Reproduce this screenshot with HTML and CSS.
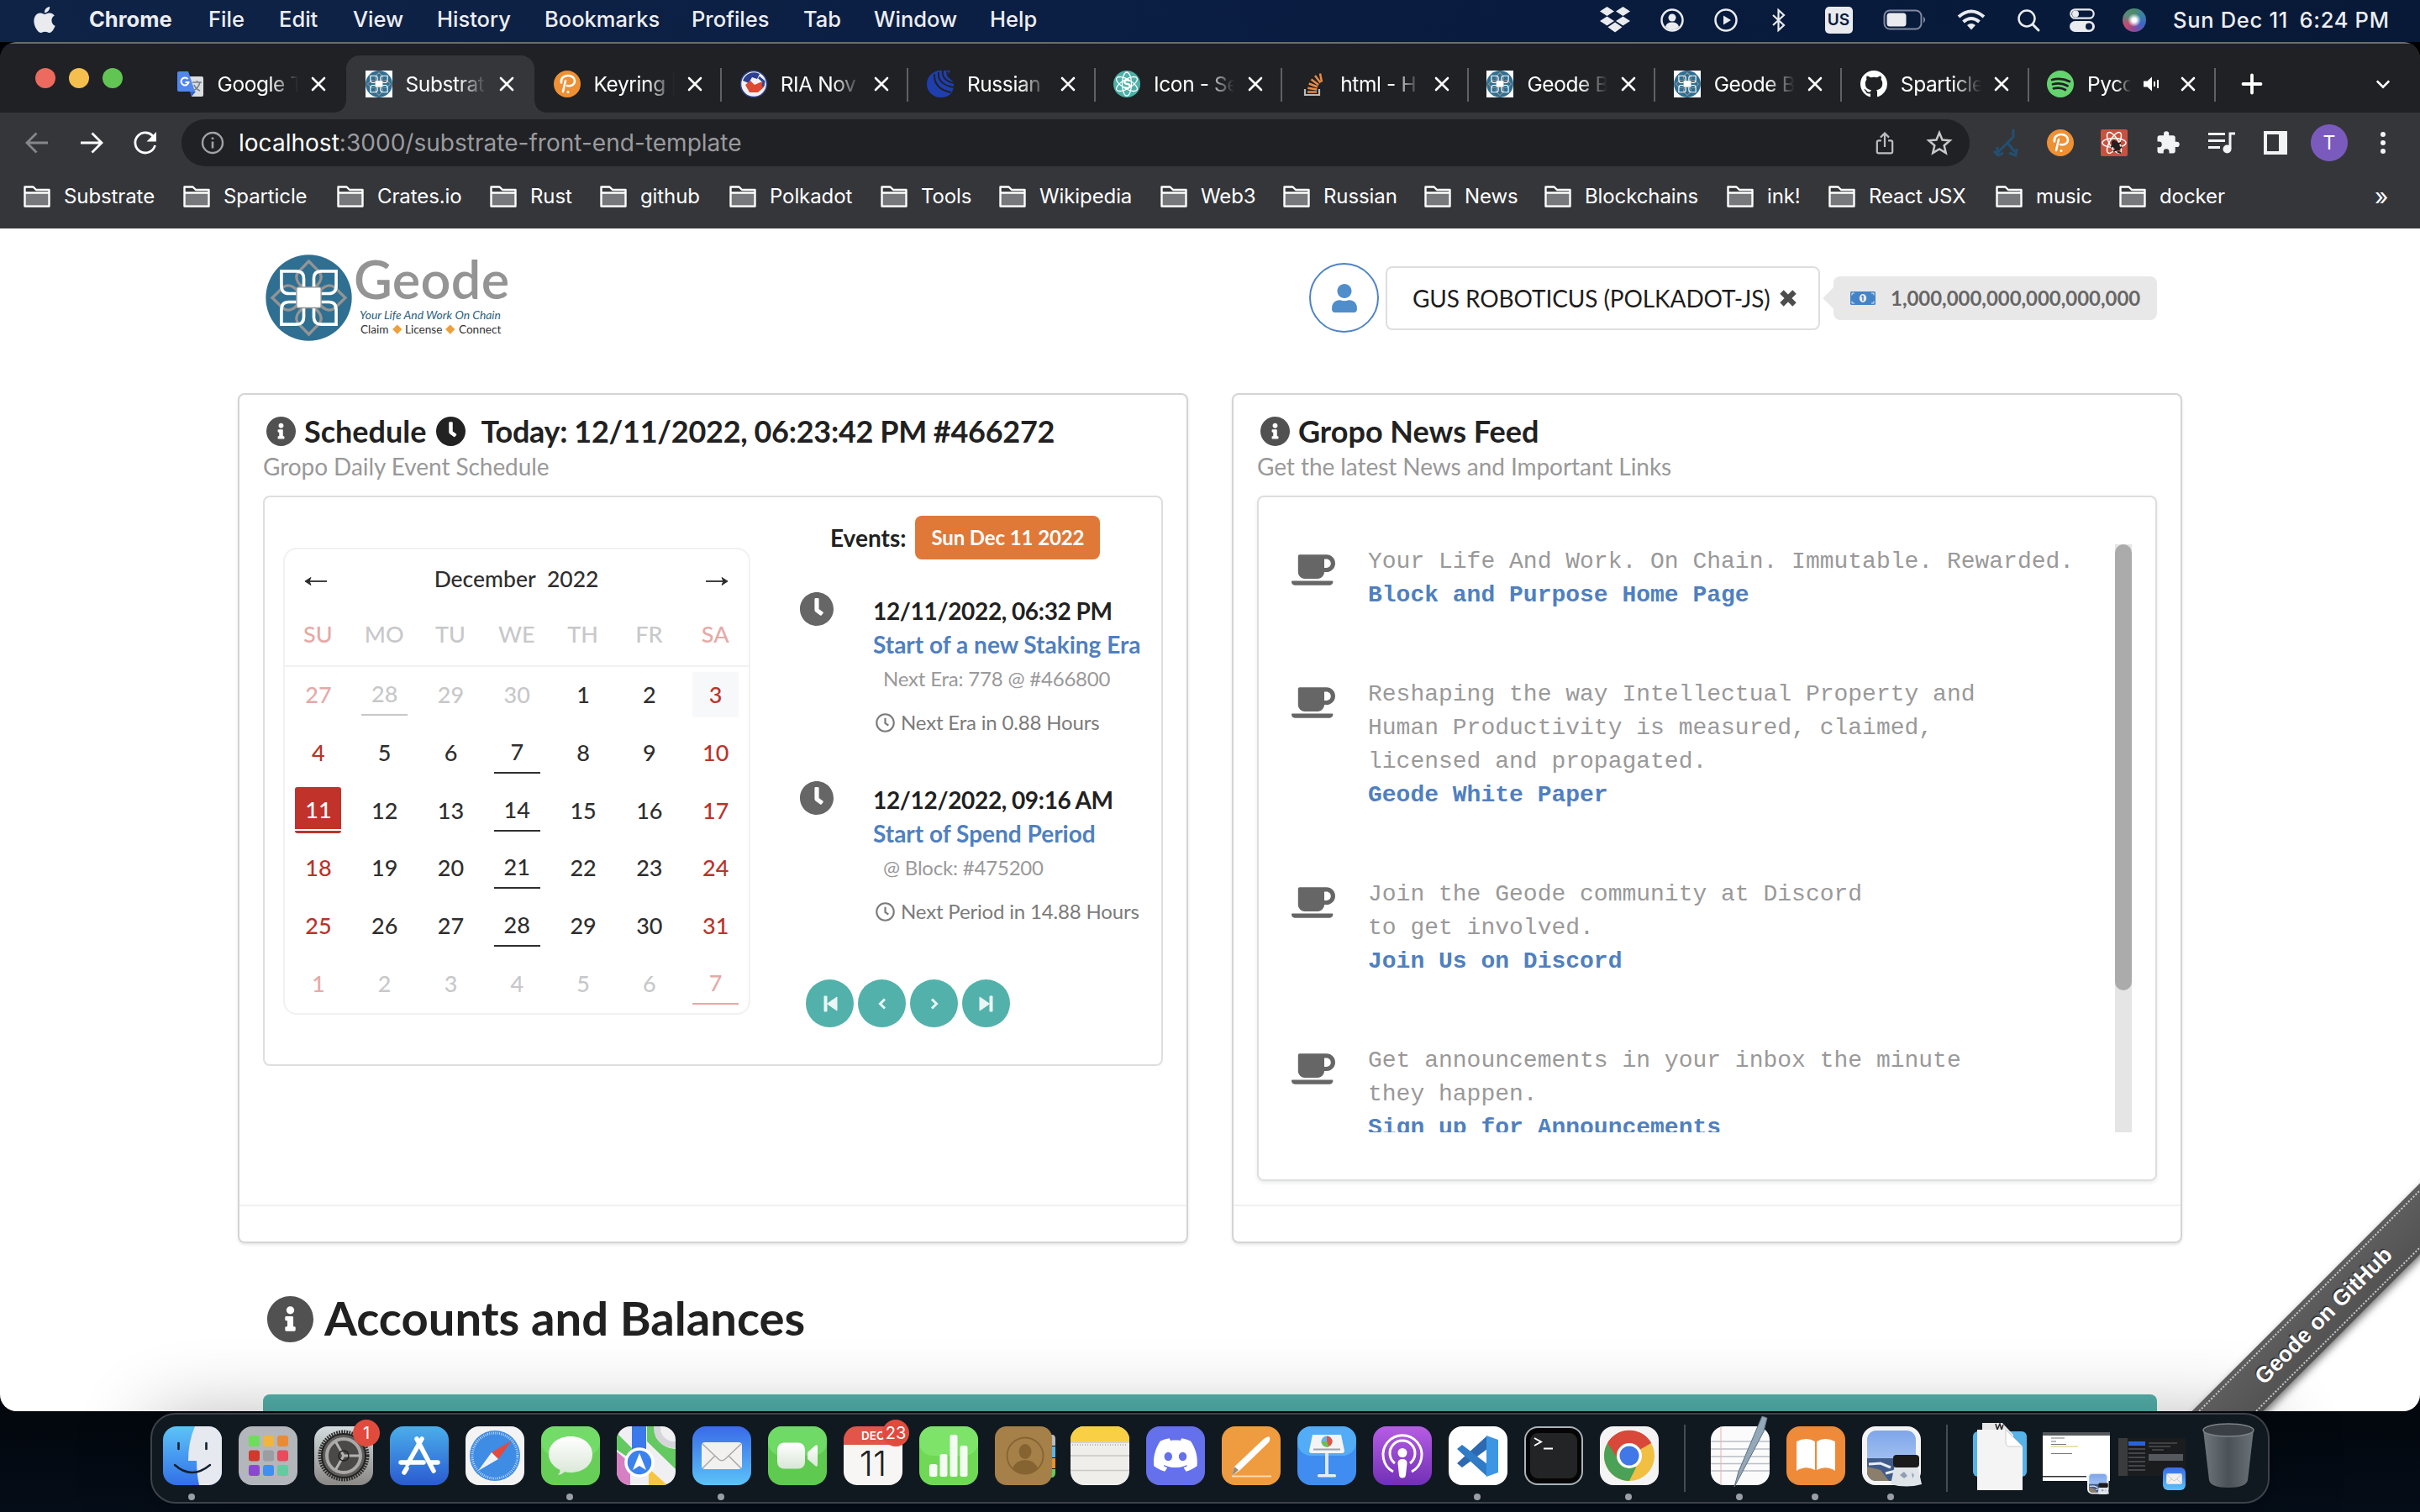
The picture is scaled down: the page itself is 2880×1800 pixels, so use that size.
FILE: index.html
```html
<!DOCTYPE html>
<html lang="en">
<head>
<meta charset="utf-8">
<title>Substrate Front End Template</title>
<link rel="stylesheet" href="styles.css">
</head>
<body>
<svg class="defs" aria-hidden="true">
  <symbol id="geode" viewBox="48 38 310 310">
    <circle cx="203" cy="193" r="154" fill="#2f6f91"/>
    <g fill="none" stroke="#949494" stroke-width="10">
      <path id="gp" d="M216 158C238 150 258 122 240 100L203 62 166 100C148 122 168 150 190 158"/>
      <use href="#gp" transform="rotate(90 203 193)"/><use href="#gp" transform="rotate(180 203 193)"/><use href="#gp" transform="rotate(270 203 193)"/>
    </g>
    <g fill="none" stroke="#fff" stroke-width="11">
      <path id="wp" d="M185 160V124Q185 98 159 98H105V150Q105 178 132 178H165"/>
      <use href="#wp" transform="matrix(-1 0 0 1 406 0)"/><use href="#wp" transform="matrix(1 0 0 -1 0 386)"/><use href="#wp" transform="matrix(-1 0 0 -1 406 386)"/>
    </g>
    <rect x="159" y="155" width="88" height="74" rx="6" fill="#fff" stroke="#949494" stroke-width="4"/>
  </symbol>
  <symbol id="close" viewBox="0 0 18 18"><path d="M2 2l14 14M16 2L2 16" fill="none" stroke="#fff" stroke-width="2.6" stroke-linecap="round"/></symbol>
  <symbol id="folder" viewBox="0 0 32 26"><path d="M2 8h28v15H2z" fill="#77787b"/><path d="M1.5 24.5v-23h10l3.5 3.500h15.500v19.500zM1.500 8.500h29" fill="none" stroke="#fff" stroke-width="2.400" stroke-linejoin="round"/></symbol>
  <symbol id="info" viewBox="8 8 496 496"><path d="M256 8C119.043 8 8 119.083 8 256c0 136.997 111.043 248 248 248s248-111.003 248-248C504 119.083 392.957 8 256 8zm0 110c23.196 0 42 18.804 42 42s-18.804 42-42 42-42-18.804-42-42 18.804-42 42-42zm56 254c0 6.627-5.373 12-12 12h-88c-6.627 0-12-5.373-12-12v-24c0-6.627 5.373-12 12-12h12v-64h-12c-6.627 0-12-5.373-12-12v-24c0-6.627 5.373-12 12-12h64c6.627 0 12 5.373 12 12v100h12c6.627 0 12 5.373 12 12v24z"/></symbol>
  <symbol id="clock" viewBox="8 8 496 496"><path d="M256,8C119,8,8,119,8,256S119,504,256,504,504,393,504,256,393,8,256,8Zm92.49,313h0l-20,25a16,16,0,0,1-22.49,2.5h0l-67-49.72a40,40,0,0,1-15-31.23V112a16,16,0,0,1,16-16h32a16,16,0,0,1,16,16V256l58,42.5A16,16,0,0,1,348.490,321Z"/></symbol>
  <symbol id="clock-o" viewBox="0 0 24 24"><circle cx="12" cy="12" r="10.700" fill="none" stroke="currentColor" stroke-width="2.200"/><path d="M12 6v6.400l4 2.900" fill="none" stroke="currentColor" stroke-width="2.300"/></symbol>
  <symbol id="cup" viewBox="0 32 640 448"><path d="M192 384h192c53 0 96-43 96-96h32c70.600 0 128-57.400 128-128S582.600 32 512 32H120c-13.300 0-24 10.700-24 24v232c0 53 43 96 96 96zM512 96c35.300 0 64 28.700 64 64s-28.700 64-64 64h-32V96h32zm47.700 384H48.300c-47.600 0-61-64-36-64h583.300c25 0 11.800 64-35.900 64z"/></symbol>
  <symbol id="pdot" viewBox="0 0 32 32"><circle cx="16" cy="16" r="16" fill="#ee9034"/><path d="M11 25l3-13M9 14.500C8 9 12 6 17 6c5 0 8 3 8 6.500 0 4-4 6.500-9 5.500" fill="none" stroke="#fff" stroke-width="2.600" stroke-linecap="round"/><circle cx="17" cy="25.500" r="1.500" fill="#fff"/></symbol>
  <symbol id="mail" viewBox="0 0 70 70"><rect width="70" height="70" rx="16" fill="url(#mailg)"/><rect x="11" y="19" width="48" height="32" rx="4" fill="#f2f1f0"/><path d="M12 21l19 18q4 3.500 8 0l19-18M12 50l15-15M58 50L43 35" fill="none" stroke="#a9a9a9" stroke-width="1.500"/></symbol>
  <linearGradient id="mailg" x1="0" y1="0" x2="0" y2="1"><stop offset="0" stop-color="#3a6be8"/><stop offset="1" stop-color="#5bc3f8"/></linearGradient>
  <linearGradient id="skyg" x1="0" y1="0" x2="0" y2="1"><stop offset="0" stop-color="#7fa6ea"/><stop offset="1" stop-color="#b8d2f4"/></linearGradient>
  <linearGradient id="whiteg" x1="0" y1="0" x2="0" y2="1"><stop offset="0" stop-color="#fff"/><stop offset="1" stop-color="#d9e6d6"/></linearGradient>
  <linearGradient id="trashg" x1="0" y1="0" x2="1" y2="0"><stop offset="0" stop-color="#70777c"/><stop offset=".5" stop-color="#4b5257"/><stop offset="1" stop-color="#6b7277"/></linearGradient>
  <linearGradient id="finderg" x1="0" y1="0" x2="0" y2="1"><stop offset="0" stop-color="#5cc4f7"/><stop offset="1" stop-color="#3270e8"/></linearGradient>
  <linearGradient id="gearg" x1="0" y1="0" x2="0" y2="1"><stop offset="0" stop-color="#d3dcde"/><stop offset="1" stop-color="#8a8885"/></linearGradient>
  <symbol id="preview" viewBox="0 0 74 74"><rect width="70" height="70" rx="16" fill="#f4f4f4"/><rect x="6" y="5" width="58" height="60" rx="11" fill="url(#skyg)"/><path d="M6 38h58v16a11 11 0 0 1-11 11H17A11 11 0 0 1 6 54z" fill="#3f5b8a"/><path d="M6 48l16 4 10 13H17A11 11 0 0 1 6 54z" fill="#8b7f6b"/><path d="M8 45l14-1 12 5M28 56l12-3" stroke="#e6edf4" stroke-width="3" fill="none"/><path d="M39 46h27l5 23q-18 5-37 0z" fill="#dfe4e8"/><rect x="37" y="34" width="31" height="15" rx="4" fill="#1b1b1b"/><path d="M45 58l5-4 4 5-4 3zM59 55l3 3-2 4" fill="#8fa0b0"/></symbol>
</svg>

<header class="menubar">
  <nav class="menus">
    <svg class="apple" viewBox="2 0 20 24"><path fill="#e9ebef" d="M12.152 6.896c-.948 0-2.415-1.078-3.960-1.040-2.040.027-3.910 1.183-4.961 3.014-2.117 3.675-.546 9.103 1.519 12.090 1.013 1.454 2.208 3.090 3.792 3.039 1.520-.065 2.090-.987 3.935-.987 1.831 0 2.350.987 3.960.948 1.637-.026 2.676-1.480 3.676-2.948 1.156-1.688 1.636-3.325 1.662-3.415-.039-.013-3.182-1.221-3.220-4.857-.026-3.040 2.480-4.494 2.597-4.559-1.429-2.090-3.623-2.324-4.390-2.376-2-.156-3.675 1.090-4.610 1.090zM15.530 3.830c.843-1.012 1.400-2.427 1.245-3.830-1.207.052-2.662.805-3.532 1.818-.780.896-1.454 2.338-1.273 3.714 1.338.104 2.715-.688 3.559-1.701"/></svg>
    <span class="app">Chrome</span><span>File</span><span>Edit</span><span>View</span><span>History</span><span>Bookmarks</span><span>Profiles</span><span>Tab</span><span>Window</span><span>Help</span>
  </nav>
  <div class="status">
    <svg width="38" height="34" viewBox="0 0 38 34" fill="#e9ebef"><path d="M9.500 1L18 6.500 9.500 12 1 6.500zM28.500 1L37 6.500 28.500 12 20 6.500zM9.500 12.500L18 18l-8.500 5.500L1 18zM28.500 12.500L37 18l-8.500 5.500L20 18zM19 19.500l8.500 5.700L19 31.500l-8.500-6.300z"/></svg>
    <svg width="28" height="28" viewBox="0 0 28 28"><circle cx="14" cy="14" r="12.500" fill="none" stroke="#e9ebef" stroke-width="2.500"/><circle cx="14" cy="11" r="4.500" fill="#e9ebef"/><path d="M6 22q1-5.500 8-5.500t8 5.500q-3.500 3.500-8 3.500T6 22z" fill="#e9ebef"/></svg>
    <svg width="28" height="28" viewBox="0 0 28 28"><circle cx="14" cy="14" r="12.500" fill="none" stroke="#e9ebef" stroke-width="2.500"/><path d="M11 8.500l9 5.500-9 5.500z" fill="#e9ebef"/></svg>
    <svg width="18" height="28" viewBox="0 0 18 28"><path d="M2 8l13 12-6.500 6V2L15 8 2 20" fill="none" stroke="#e9ebef" stroke-width="2.200"/></svg>
    <span class="us">US</span>
    <svg width="52" height="26" viewBox="0 0 52 26"><rect x="1.500" y="1.500" width="44" height="22" rx="6.500" fill="none" stroke="#8089a0" stroke-width="2"/><rect x="4.500" y="4.500" width="23" height="16" rx="3.500" fill="#e9ebef"/><path d="M48 8.500q4 4 0 8z" fill="#8089a0"/></svg>
    <svg width="34" height="26" viewBox="0 0 34 26"><path d="M2 9q15-13 30 0M7.500 15q9.500-8 19 0" fill="none" stroke="#e9ebef" stroke-width="4"/><path d="M12 19q5-4 10 0l-5 5.500z" fill="#e9ebef"/></svg>
    <svg width="28" height="28" viewBox="0 0 28 28"><circle cx="12" cy="12" r="9.500" fill="none" stroke="#e9ebef" stroke-width="2.500"/><path d="M19 19l7 7" stroke="#e9ebef" stroke-width="3" stroke-linecap="round"/></svg>
    <svg width="30" height="28" viewBox="0 0 30 28"><rect x="1.300" y="1.300" width="27.400" height="10.400" rx="5.200" fill="none" stroke="#e9ebef" stroke-width="2.200"/><circle cx="7" cy="6.500" r="4" fill="#e9ebef"/><rect x="0" y="15" width="30" height="13" rx="6.500" fill="#e9ebef"/><circle cx="23" cy="21.500" r="4" fill="#0b1d42"/></svg>
    <span class="siri"></span>
    <time>Sun Dec 11&ensp;6:24 PM</time>
  </div>
</header>

<section class="window">
  <div class="tabstrip">
    <div class="lights"><i></i><i></i><i></i></div>
    <div class="tab wide">
      <svg class="fav" viewBox="0 0 32 32"><path d="M13 7h16a2 2 0 0 1 2 2v20a2 2 0 0 1-2 2H17z" fill="#dcdee0"/><path d="M18 14h11M23.500 12v2M27 14q-2 7-8 10M20 17q2 5 7 7" stroke="#76808c" stroke-width="1.600" fill="none"/><path d="M17 31l5-6h-7z" fill="#3663c8"/><path d="M2 1h11l8 24H2a2 2 0 0 1-2-2V3a2 2 0 0 1 2-2z" fill="#5287ec"/><path d="M12.500 10a4.500 4.500 0 1 0 1 4h-4" fill="none" stroke="#fff" stroke-width="2"/></svg>
      <span class="title">Google T</span><svg class="x"><use href="#close"/></svg></div>
    <div class="tab wide active"><span class="fav white"><svg viewBox="0 0 32 32"><use href="#geode" width="32" height="32"/></svg></span><span class="title">Substrat</span><svg class="x"><use href="#close"/></svg></div>
    <div class="tab"><svg class="fav"><use href="#pdot"/></svg><span class="title">Keyring |</span><svg class="x"><use href="#close"/></svg></div>
    <div class="tab"><svg class="fav" viewBox="0 0 32 32"><circle cx="16" cy="16" r="15.500" fill="#f2f2f6" stroke="#31458f" stroke-width="1.500"/><path d="M3 12a14 14 0 0 1 20-8l-3 6-6-2-4 7z" fill="#2d3f92"/><path d="M6 17l6-5 5 5 9-4 2 7-7 6H11z" fill="#dd4a32"/><path d="M22 8l6 5-1 6" stroke="#31458f" stroke-width="3" fill="none"/></svg><span class="title">RIA Nov</span><svg class="x"><use href="#close"/></svg></div>
    <div class="tab"><svg class="fav" viewBox="0 0 32 32"><path d="M16 0h12q-6 6 4 14v4q-1 14-16 14A16 16 0 0 1 16 0z" fill="#1f3fae"/><path d="M14 2q-2 14 18 18M19 0q-2 11 13 15M24 1q0 7 8 10M9 4q-1 18 20 22" stroke="#202124" stroke-width="2" fill="none"/></svg><span class="title">Russian</span><svg class="x"><use href="#close"/></svg></div>
    <div class="tab"><svg class="fav" viewBox="0 0 32 32"><circle cx="16" cy="16" r="16" fill="#4cb1a8"/><g fill="none" stroke="#fff" stroke-width="1.300"><ellipse cx="16" cy="16" rx="5.500" ry="14"/><ellipse cx="16" cy="16" rx="5.500" ry="14" transform="rotate(60 16 16)"/><ellipse cx="16" cy="16" rx="5.500" ry="14" transform="rotate(120 16 16)"/><path d="M19.500 12.500q-3.500-2.500-6 0 -1 3 3 3.500t3 3.500q-3 3-7 0" stroke-width="2.400"/></g></svg><span class="title">Icon - Se</span><svg class="x"><use href="#close"/></svg></div>
    <div class="tab"><svg class="fav" viewBox="0 0 32 32"><path d="M6 22v7h17v-7" fill="none" stroke="#b9bbbd" stroke-width="2.200"/><path d="M9 25.500h11M9.300 20.700l11 1.700M10.700 15.500l10.300 4M13.500 10.500l8.700 6.500M18 6l6.500 8.500M24 3.500l2 10" stroke="#e58b4a" stroke-width="2.500"/></svg><span class="title">html - H</span><svg class="x"><use href="#close"/></svg></div>
    <div class="tab"><span class="fav white"><svg viewBox="0 0 32 32"><use href="#geode" width="32" height="32"/></svg></span><span class="title">Geode B</span><svg class="x"><use href="#close"/></svg></div>
    <div class="tab"><span class="fav white"><svg viewBox="0 0 32 32"><use href="#geode" width="32" height="32"/></svg></span><span class="title">Geode B</span><svg class="x"><use href="#close"/></svg></div>
    <div class="tab"><svg class="fav" viewBox="0 0 16 16"><path fill="#fff" d="M8 0C3.580 0 0 3.580 0 8c0 3.540 2.290 6.530 5.470 7.590.4.070.550-.170.550-.380 0-.190-.010-.820-.010-1.490-2.010.370-2.530-.490-2.690-.940-.090-.230-.480-.940-.820-1.130-.280-.150-.680-.520-.010-.530.630-.010 1.080.580 1.230.820.720 1.210 1.870.870 2.330.660.070-.520.280-.870.510-1.070-1.780-.200-3.640-.890-3.640-3.950 0-.870.310-1.590.820-2.150-.080-.200-.360-1.020.080-2.120 0 0 .670-.210 2.200.820.640-.180 1.320-.270 2-.270s1.360.090 2 .270c1.530-1.040 2.200-.820 2.200-.820.440 1.100.160 1.920.080 2.120.510.560.820 1.270.820 2.150 0 3.070-1.870 3.750-3.650 3.950.290.250.540.730.540 1.480 0 1.070-.010 1.930-.010 2.200 0 .210.150.460.550.380A8.010 8.010 0 0 0 16 8c0-4.420-3.580-8-8-8z"/></svg><span class="title">Sparticle</span><svg class="x"><use href="#close"/></svg></div>
    <div class="tab"><svg class="fav" viewBox="0 0 32 32"><circle cx="16" cy="16" r="16" fill="#65d36e"/><path d="M6 11q11-3 21 2M7 16.300q9.500-2.500 17.500 2M8 21.300q8-2 14 1.700" fill="none" stroke="#202124" stroke-width="2.700" stroke-linecap="round"/></svg><span class="title short">Русс</span><svg class="sound" viewBox="0 0 18 18"><path d="M0 5.500h4.500L10 .5v17l-5.500-5H0z" fill="#fff"/><path d="M13 6v6M17 4v10" stroke="#fff" stroke-width="2"/></svg><svg class="x"><use href="#close"/></svg></div>
    <svg class="plus" viewBox="0 0 24 24"><path d="M12 1.500v21M1.500 12h21" stroke="#fff" stroke-width="3.800" stroke-linecap="round"/></svg>
    <svg class="chev" viewBox="0 0 20 12"><path d="M2 2l8 8 8-8" fill="none" stroke="#fff" stroke-width="3"/></svg>
  </div>

  <div class="toolbar">
    <svg class="nav" viewBox="0 0 28 28"><path d="M27 14H2M13.500 2.500L2 14l11.500 11.500" fill="none" stroke="#85878a" stroke-width="2.800"/></svg>
    <svg class="nav" viewBox="0 0 28 28"><path d="M1 14h25M14.500 2.500L26 14 14.500 25.500" fill="none" stroke="#fff" stroke-width="2.800"/></svg>
    <svg class="nav" viewBox="0 0 28 28"><path d="M24 7.500A12 12 0 1 0 25.500 17" fill="none" stroke="#fff" stroke-width="2.800"/><path d="M27 1v11.500H15.500z" fill="#fff"/></svg>
    <div class="omnibox">
      <svg class="i" viewBox="0 0 28 28"><circle cx="14" cy="14" r="12" fill="none" stroke="#a0a2a5" stroke-width="2.400"/><path d="M14 12.500v8M14 7.500v2.600" stroke="#a0a2a5" stroke-width="2.600"/></svg>
      <span class="url"><b>localhost</b>:3000/substrate-front-end-template</span>
      <svg class="share" viewBox="0 0 24 30"><path d="M7.500 11.500H4a2 2 0 0 0-2 2V26a2 2 0 0 0 2 2h16a2 2 0 0 0 2-2V13.500a2 2 0 0 0-2-2h-3.500M12 20V3M6.500 7.500L12 2l5.500 5.500" fill="none" stroke="#bdbec0" stroke-width="2.400"/></svg>
      <svg class="star" viewBox="0 0 28 28"><path d="M14 2.800l3.300 7.900 8.500.7-6.500 5.600 2 8.300L14 20.900l-7.300 4.400 2-8.300-6.500-5.600 8.500-.7z" fill="none" stroke="#c8c9ca" stroke-width="2.300"/></svg>
    </div>
    <div class="exts">
      <svg width="30" height="34" viewBox="0 0 30 34"><path d="M23 1v9L5 28M4 22v10M0 27l5 5 6-3M17 18l8 10M27 24l-1 8-8-3" fill="none" stroke="#234f72" stroke-width="3"/></svg>
      <svg width="32" height="32"><use href="#pdot"/></svg>
      <svg width="32" height="32" viewBox="0 0 32 32"><rect width="32" height="32" rx="2" fill="#c65240"/><g fill="none" stroke="#fff" stroke-width="1.500"><ellipse cx="16" cy="16" rx="14" ry="5.500"/><ellipse cx="16" cy="16" rx="14" ry="5.500" transform="rotate(60 16 16)"/><ellipse cx="16" cy="16" rx="14" ry="5.500" transform="rotate(120 16 16)"/></g><ellipse cx="18" cy="19" rx="4" ry="7" transform="rotate(-35 18 19)" fill="#241f20"/><path d="M12 21l12-5M15 26l10-5M20 27l4 1" stroke="#241f20" stroke-width="2"/></svg>
      <svg width="30" height="30" viewBox="0 0 24 24"><path fill="#f1f3f4" d="M20.500 11H19V7c0-1.100-.9-2-2-2h-4V3.500a2.500 2.500 0 0 0-5 0V5H4c-1.100 0-2 .9-2 2v3.800h1.500a2.700 2.700 0 0 1 0 5.400H2V20c0 1.100.9 2 2 2h3.800v-1.500a2.700 2.700 0 0 1 5.400 0V22H17c1.100 0 2-.9 2-2v-4h1.500a2.500 2.500 0 0 0 0-5z"/></svg>
      <svg width="32" height="26" viewBox="0 0 32 26"><path d="M0 2.500h20M0 10.500h20M0 18.500h14M26 20V2h6" fill="none" stroke="#f1f3f4" stroke-width="3"/><circle cx="22.500" cy="20.500" r="5" fill="#f1f3f4"/></svg>
      <svg width="28" height="28" viewBox="0 0 28 28"><path fill="#f1f3f4" fill-rule="evenodd" d="M0 0h28v28H0zM4 4v20h14V4z"/></svg>
      <span class="avatar">T</span>
      <svg width="8" height="26" viewBox="0 0 8 26" fill="#f1f3f4"><circle cx="4" cy="3" r="3"/><circle cx="4" cy="13" r="3"/><circle cx="4" cy="23" r="3"/></svg>
    </div>
  </div>

  <div class="bookmarks">
    <span><svg><use href="#folder"/></svg>Substrate</span><span><svg><use href="#folder"/></svg>Sparticle</span><span><svg><use href="#folder"/></svg>Crates.io</span><span><svg><use href="#folder"/></svg>Rust</span><span><svg><use href="#folder"/></svg>github</span><span><svg><use href="#folder"/></svg>Polkadot</span><span><svg><use href="#folder"/></svg>Tools</span><span><svg><use href="#folder"/></svg>Wikipedia</span><span><svg><use href="#folder"/></svg>Web3</span><span><svg><use href="#folder"/></svg>Russian</span><span><svg><use href="#folder"/></svg>News</span><span><svg><use href="#folder"/></svg>Blockchains</span><span><svg><use href="#folder"/></svg>ink!</span><span><svg><use href="#folder"/></svg>React JSX</span><span><svg><use href="#folder"/></svg>music</span><span><svg><use href="#folder"/></svg>docker</span><span class="more">»</span>
  </div>

  <main class="page">
    <div class="top">
      <div class="logo">
        <svg class="mark"><use href="#geode"/></svg>
        <div class="words">
          <div class="name">Geode</div>
          <div class="tagline">Your Life And Work On Chain</div>
          <div class="claims">Claim <i></i> License <i></i> Connect</div>
        </div>
      </div>
      <div class="account">
        <span class="user"><svg viewBox="0 0 448 512"><path fill="#4f8ecb" d="M224 256c70.700 0 128-57.300 128-128S294.700 0 224 0 96 57.300 96 128s57.300 128 128 128zm89.600 32h-16.700c-22.200 10.200-46.900 16-72.900 16s-50.600-5.800-72.900-16h-16.700C60.200 288 0 348.200 0 422.400V464c0 26.500 21.500 48 48 48h352c26.500 0 48-21.500 48-48v-41.600c0-74.200-60.200-134.400-134.400-134.400z"/></svg></span>
        <span class="select">GUS ROBOTICUS (POLKADOT-JS)<svg viewBox="2 2 16 16"><path d="M4 4l12 12M16 4L4 16" stroke="#4d4d4d" stroke-width="5"/></svg></span>
        <span class="balance"><svg viewBox="0 0 30 16"><rect width="30" height="16" rx="1.500" fill="#4384c8"/><ellipse cx="15" cy="8" rx="4.200" ry="5" fill="#e8e8e8"/><path d="M15 5v6M13.500 6.500L15 5" stroke="#4384c8" stroke-width="1.500"/><path d="M2 4.500V2h3M25 2h3v2.500M2 11.500V14h3M25 14h3v-2.500" stroke="#e8e8e8" fill="none"/></svg>1,000,000,000,000,000,000</span>
      </div>
    </div>

    <div class="cards">
      <article class="card">
        <div class="body">
          <h2><svg class="grey"><use href="#info"/></svg><span class="t1">Schedule</span><svg><use href="#clock"/></svg><span class="t2">Today: 12/11/2022, 06:23:42 PM #466272</span></h2>
          <p class="meta">Gropo Daily Event Schedule</p>
          <div class="segment schedule">
            <div class="calendar">
              <div class="cal-head"><svg viewBox="0 0 26 12"><path d="M26 6H3" stroke="#2c2c2c" stroke-width="1.800"/><path d="M0 6l7-4.500-2 4.500 2 4.500z" fill="#2c2c2c" stroke="#2c2c2c"/></svg><span>December&ensp;2022</span><svg viewBox="0 0 26 12"><path d="M0 6h23" stroke="#2c2c2c" stroke-width="1.800"/><path d="M26 6l-7-4.500 2 4.500-2 4.500z" fill="#2c2c2c" stroke="#2c2c2c"/></svg></div>
              <div class="cal-days"><span class="r l">SU</span><span>MO</span><span>TU</span><span>WE</span><span>TH</span><span>FR</span><span class="r l">SA</span></div>
              <div class="cal-grid">
                <b class="r l">27</b><b class="l u">28</b><b class="l">29</b><b class="l">30</b><b>1</b><b>2</b><b class="r h">3</b>
                <b class="r">4</b><b>5</b><b>6</b><b class="u">7</b><b>8</b><b>9</b><b class="r">10</b>
                <b class="today">11</b><b>12</b><b>13</b><b class="u">14</b><b>15</b><b>16</b><b class="r">17</b>
                <b class="r">18</b><b>19</b><b>20</b><b class="u">21</b><b>22</b><b>23</b><b class="r">24</b>
                <b class="r">25</b><b>26</b><b>27</b><b class="u">28</b><b>29</b><b>30</b><b class="r">31</b>
                <b class="r l">1</b><b class="l">2</b><b class="l">3</b><b class="l">4</b><b class="l">5</b><b class="l">6</b><b class="r l u">7</b>
              </div>
            </div>
            <div class="events">
              <div class="ev-head">Events: <span>Sun Dec 11 2022</span></div>
              <div class="event"><svg><use href="#clock"/></svg><div><strong>12/11/2022, 06:32 PM</strong><a>Start of a new Staking Era</a><p>Next Era: 778 @ #466800</p><small><svg><use href="#clock-o"/></svg>Next Era in 0.88 Hours</small></div></div>
              <div class="event"><svg><use href="#clock"/></svg><div><strong>12/12/2022, 09:16 AM</strong><a>Start of Spend Period</a><p>@ Block: #475200</p><small><svg><use href="#clock-o"/></svg>Next Period in 14.88 Hours</small></div></div>
              <div class="pager">
                <span><svg viewBox="0 0 20 20"><path d="M3 1h3v18H3zM18 2v16L6.500 10z" fill="#eaf6f5" stroke="#eaf6f5" stroke-linejoin="round"/></svg></span>
                <span><svg viewBox="0 0 20 20"><path d="M13 4.500L7.500 10l5.500 5.500" fill="none" stroke="#eaf6f5" stroke-width="3"/></svg></span>
                <span><svg viewBox="0 0 20 20"><path d="M7 4.500l5.500 5.500L7 15.500" fill="none" stroke="#eaf6f5" stroke-width="3"/></svg></span>
                <span><svg viewBox="0 0 20 20"><path d="M14 1h3v18h-3zM2 2v16l11.500-8z" fill="#eaf6f5" stroke="#eaf6f5" stroke-linejoin="round"/></svg></span>
              </div>
            </div>
          </div>
        </div>
        <div class="foot"></div>
      </article>

      <article class="card">
        <div class="body">
          <h2><svg class="grey"><use href="#info"/></svg><span class="t1">Gropo News Feed</span></h2>
          <p class="meta">Get the latest News and Important Links</p>
          <div class="segment news">
            <div class="feed">
              <ul>
                <li><svg><use href="#cup"/></svg><div>Your Life And Work. On Chain. Immutable. Rewarded.<a>Block and Purpose Home Page</a></div></li>
                <li><svg><use href="#cup"/></svg><div>Reshaping the way Intellectual Property and<br>Human Productivity is measured, claimed,<br>licensed and propagated.<a>Geode White Paper</a></div></li>
                <li><svg><use href="#cup"/></svg><div>Join the Geode community at Discord<br>to get involved.<a>Join Us on Discord</a></div></li>
                <li><svg><use href="#cup"/></svg><div>Get announcements in your inbox the minute<br>they happen.<a>Sign up for Announcements</a></div></li>
              </ul>
              <div class="scroll"><i></i></div>
            </div>
          </div>
        </div>
        <div class="foot"></div>
      </article>
    </div>

    <h1><svg><use href="#info"/></svg>Accounts and Balances</h1>
    <div class="table-top"></div>
    <div class="ribbon"><span>Geode on GitHub</span></div>
  </main>
</section>

<footer class="dock">
  <span class="app on"><svg viewBox="0 0 70 70"><rect width="70" height="70" rx="16" fill="url(#finderg)"/><path d="M38 0h16a16 16 0 0 1 16 16v38a16 16 0 0 1-16 16H43q-3-13-3-29H30Q30 18 38 0z" fill="#e6e9ef"/><path d="M18.500 20v7M51.500 20v7" stroke="#15202e" stroke-width="2.600" stroke-linecap="round"/><path d="M14 46q20 18 42 0" fill="none" stroke="#15202e" stroke-width="2.400" stroke-linecap="round"/></svg></span>
  <span class="app"><svg viewBox="0 0 70 70"><rect width="70" height="70" rx="16" fill="#b3b6ba"/><g><rect x="12" y="11" width="13" height="13" rx="3" fill="#6fdd5c"/><rect x="29" y="11" width="13" height="13" rx="3" fill="#f0b53c"/><rect x="46" y="11" width="13" height="13" rx="3" fill="#e98b35"/><rect x="12" y="28.500" width="13" height="13" rx="3" fill="#cf3a2c"/><rect x="29" y="28.500" width="13" height="13" rx="3" fill="#9a9ea2"/><rect x="46" y="28.500" width="13" height="13" rx="3" fill="#e84b5b"/><rect x="12" y="46" width="13" height="13" rx="3" fill="#8b48cf"/><rect x="29" y="46" width="13" height="13" rx="3" fill="#4090f0"/><rect x="46" y="46" width="13" height="13" rx="3" fill="#63cba0"/></g></svg></span>
  <span class="app"><svg viewBox="0 0 70 70"><rect width="70" height="70" rx="16" fill="url(#gearg)"/><circle cx="35" cy="35" r="28" fill="none" stroke="#2d2d2d" stroke-width="5" stroke-dasharray="1.800 1.200"/><circle cx="35" cy="35" r="26" fill="#5c5b5a" stroke="#222" stroke-width="2"/><circle cx="35" cy="35" r="20" fill="#4a4948" stroke="#a9a8a6" stroke-width="4"/><path d="M35 35h19M35 35L25.500 18.500M35 35l-9.500 16.500" stroke="#b3b2b0" stroke-width="3"/><circle cx="35" cy="35" r="6" fill="none" stroke="#222" stroke-width="1.500"/></svg><em>1</em></span>
  <span class="app"><svg viewBox="0 0 70 70"><defs><linearGradient id="asg" x1="0" y1="0" x2="0" y2="1"><stop offset="0" stop-color="#4aaeea"/><stop offset="1" stop-color="#2a5bd0"/></linearGradient></defs><rect width="70" height="70" rx="16" fill="url(#asg)"/><path d="M38 15L21 45M32 15l20 38M13 43h27M48 43h9M20 50l-3 5" stroke="#fff" stroke-width="5.500" stroke-linecap="round"/></svg></span>
  <span class="app"><svg viewBox="0 0 70 70"><rect width="70" height="70" rx="16" fill="#f3f3f3"/><circle cx="35" cy="35" r="30" fill="#3e8ce4"/><circle cx="35" cy="35" r="27" fill="none" stroke="#d8e8fa" stroke-width="3" stroke-dasharray=".8 1.600"/><path d="M55 17L39 39l-8-8z" fill="#e5493a"/><path d="M15 53l16-22 8 8z" fill="#f2f2f2"/></svg></span>
  <span class="app on"><svg viewBox="0 0 70 70"><rect width="70" height="70" rx="16" fill="#67cf58"/><rect width="70" height="35" rx="16" fill="#7fea7a" opacity=".5"/><path d="M35 12c15 0 26 9 26 21.500S50 55 35 55q-4 0-7-.7-3 3-8 3.700 3-3 2.500-6C14 48 9 41 9 33.500 9 21 20 12 35 12z" fill="url(#whiteg)"/></svg></span>
  <span class="app"><svg viewBox="0 0 70 70"><clipPath id="mc"><rect width="70" height="70" rx="16"/></clipPath><g clip-path="url(#mc)"><rect width="70" height="70" fill="#f0f0f2"/><path d="M0 8l18 18v14L0 28z M36 0h10v12q8 14 24 15v24L36 18z" fill="#65c962"/><circle cx="68" cy="2" r="20" fill="none" stroke="#d5d5da" stroke-width="8"/><path d="M0 30l16 14v26H0z" fill="#d77fc3"/><path d="M38 50l22 20H38z" fill="#f6c542"/><path d="M18 0h17v34H18z" fill="#3b79ec"/></g><circle cx="27" cy="43" r="16" fill="#3b82ee" stroke="#fff" stroke-width="3.500"/><path d="M27 32l8 20-8-5-8 5z" fill="#fff"/></svg></span>
  <span class="app on"><svg><use href="#mail"/></svg></span>
  <span class="app"><svg viewBox="0 0 70 70"><rect width="70" height="70" rx="16" fill="#5fca50"/><rect width="70" height="35" rx="16" fill="#7fea7a" opacity=".5"/><rect x="11" y="19.500" width="33" height="31" rx="8" fill="url(#whiteg)"/><path d="M47 31l9-8q3-2 3 1v22q0 3-3 1l-9-8z" fill="url(#whiteg)"/></svg></span>
  <span class="app cal"><i>DEC</i><b>11</b><em>23</em></span>
  <span class="app"><svg viewBox="0 0 70 70"><rect width="70" height="70" rx="16" fill="#6fd956"/><rect width="70" height="35" rx="16" fill="#8cf07c" opacity=".5"/><g fill="#f4fbf2"><rect x="12" y="45" width="9.500" height="15" rx="2.500"/><rect x="24.500" y="33" width="9" height="27" rx="2.500"/><rect x="36.500" y="10" width="9" height="50" rx="2.500"/><rect x="48.500" y="23" width="9" height="37" rx="2.500"/></g></svg></span>
  <span class="app"><svg viewBox="0 0 70 70"><path d="M62 10h6q4 0 4 5v8H62z" fill="#b9bcc0"/><path d="M62 24h10v13H62z" fill="#5db5e8"/><path d="M62 38h10v12H62z" fill="#e98f2e"/><path d="M62 51h10v4q0 6-5 6h-5z" fill="#6bc95b"/><rect width="68" height="70" rx="14" fill="#a68049"/><circle cx="36" cy="35" r="21.500" fill="none" stroke="#866432" stroke-width="1.800"/><ellipse cx="36" cy="30" rx="7.500" ry="9" fill="#866432"/><path d="M21 50q4-10 15-10t15 10q-6 6.500-15 6.500T21 50z" fill="#866432"/></svg></span>
  <span class="app"><svg viewBox="0 0 70 70"><rect width="70" height="70" rx="16" fill="#efeeeb"/><path d="M0 18V16A16 16 0 0 1 16 0h38a16 16 0 0 1 16 16v2z" fill="#f8cf45"/><path d="M0 19h70M0 35h70M0 52.500h70" stroke="#c9c8c4" stroke-width="1.500"/><path d="M2 22h66" stroke="#aaa" stroke-width="1.500" stroke-dasharray="1 2"/></svg></span>
  <span class="app"><svg viewBox="0 0 70 70"><rect width="70" height="70" rx="16" fill="#6470ec"/><path transform="translate(9 8) scale(2.160)" fill="#fff" d="M20.317 4.370a19.791 19.791 0 00-4.885-1.515.074.074 0 00-.079.037c-.211.375-.445.865-.608 1.250-1.845-.276-3.680-.276-5.487 0-.164-.393-.406-.874-.618-1.250a.077.077 0 00-.079-.037 19.736 19.736 0 00-4.885 1.515.070.070 0 00-.032.028C.533 9.046-.319 13.580.099 18.058a.082.082 0 00.031.056c2.053 1.508 4.041 2.423 5.993 3.029a.078.078 0 00.084-.028c.462-.630.873-1.295 1.226-1.994a.076.076 0 00-.042-.106c-.653-.248-1.274-.550-1.872-.892a.077.077 0 01-.008-.128c.126-.094.252-.192.372-.291a.074.074 0 01.078-.011c3.928 1.793 8.180 1.793 12.061 0a.074.074 0 01.079.010c.120.099.246.198.373.292a.077.077 0 01-.007.128 12.299 12.299 0 01-1.873.891.077.077 0 00-.041.107c.360.698.772 1.363 1.225 1.993a.076.076 0 00.084.029c1.961-.607 3.950-1.522 6.002-3.029a.077.077 0 00.031-.055c.500-5.177-.838-9.674-3.549-13.660a.061.061 0 00-.031-.029zM8.020 15.331c-1.183 0-2.157-1.086-2.157-2.419 0-1.333.956-2.419 2.157-2.419 1.211 0 2.176 1.095 2.157 2.419 0 1.333-.956 2.419-2.157 2.419zm7.975 0c-1.183 0-2.157-1.086-2.157-2.419 0-1.333.955-2.419 2.157-2.419 1.211 0 2.176 1.095 2.157 2.419 0 1.333-.946 2.419-2.157 2.419z"/></svg></span>
  <span class="app"><svg viewBox="0 0 70 70"><rect width="70" height="70" rx="16" fill="#ef9b3f"/><path d="M12 59.500h47" stroke="#fbd9ad" stroke-width="2"/><path d="M12 59l3-11L50 15q6-4 7-2t-1 6L22 52z" fill="#fff"/><path d="M12 59l3-11 5 4z" fill="#9b8c7c"/></svg></span>
  <span class="app"><svg viewBox="0 0 70 70"><rect width="70" height="70" rx="16" fill="#3f8df0"/><rect width="70" height="35" rx="16" fill="#5fc2fa" opacity=".6"/><path d="M18 10h34l4 19q0 3-3 3H17q-3 0-3-3z" fill="#f4f4f4"/><path d="M19 27.500h32" stroke="#98a2ac" stroke-width="2"/><circle cx="35" cy="18" r="6.500" fill="#5db6e8"/><path d="M35 18v-6.500a6.500 6.500 0 0 1 0 13z" fill="#e05545"/><path d="M35 18h-6.500a6.500 6.500 0 0 0 9 6z" fill="#6cbf52"/><path d="M35 32v26" stroke="#dfe8f2" stroke-width="4"/><rect x="24" y="57" width="22" height="3.500" rx="1.500" fill="#e9eef4"/></svg></span>
  <span class="app"><svg viewBox="0 0 70 70"><defs><linearGradient id="pcg" x1="0" y1="0" x2="0" y2="1"><stop offset="0" stop-color="#b65de4"/><stop offset="1" stop-color="#7130b6"/></linearGradient></defs><rect width="70" height="70" rx="16" fill="url(#pcg)"/><g fill="none" stroke="#fff" stroke-width="3"><path d="M24 54a23 23 0 1 1 22 0"/><path d="M26 44a15 15 0 1 1 18 0"/></g><circle cx="35" cy="31.500" r="5.500" fill="#fff"/><path d="M29.500 44q0-5 5.500-5t5.500 5l-1.500 14q-.5 3.500-4 3.500t-4-3.500z" fill="#fff"/></svg></span>
  <span class="app on"><svg viewBox="0 0 70 70"><rect width="70" height="70" rx="16" fill="#fff"/><path d="M46 11v16L16 49l-6-5z" fill="#2d69b0"/><path d="M10 27l6-5 30 23v15z" fill="#2f7bc6"/><path d="M45 11l14 5v39l-14 5z" fill="#3c96e4"/></svg></span>
  <span class="app"><svg viewBox="0 0 70 70"><rect width="70" height="70" rx="16" fill="#a9b4ba"/><rect x="2" y="2" width="66" height="66" rx="14" fill="#050505"/><rect x="7" y="8" width="56" height="54" rx="9" fill="#232425"/><path d="M12 14l8 4.500-8 4.500M23 26.500h11" fill="none" stroke="#fff" stroke-width="2"/></svg></span>
  <span class="app on"><svg viewBox="0 0 70 70"><rect width="70" height="70" rx="16" fill="#f4f4f4"/><circle cx="35" cy="35" r="30" fill="#f1bf42"/><path d="M35 35L9 20A30 30 0 0 1 61 20z" fill="#d8493a"/><path d="M9 20L35 35l8 14-8 16A30 30 0 0 1 9 20z" fill="#4ba156"/><path d="M35 19.500h26A30 30 0 0 0 9 20l12 18z" fill="#d8493a"/><circle cx="35" cy="35" r="15" fill="#fff"/><circle cx="35" cy="35" r="11.500" fill="#4078e8"/></svg></span>
  <span class="sep"></span>
  <span class="app on"><svg viewBox="0 0 70 70"><rect width="70" height="70" rx="16" fill="#fbfbfb"/><path d="M0 18h70M0 27h70M0 36h70M0 44.500h70M0 53h70" stroke="#b9bfc6" stroke-width="1.300"/><path d="M12 0v70" stroke="#ebb3b0"/><path d="M28 72l5-18 28-66 6 2-4 16-29 55z" fill="#93a8b9" stroke="#5d6f7f"/></svg></span>
  <span class="app on"><svg viewBox="0 0 70 70"><rect width="70" height="70" rx="16" fill="#ee8a38"/><path d="M12 18q12-6 22 0v34q-11-6-22 1zM36 18q10-6 22 0v35q-11-7-22-1z" fill="#fff"/></svg></span>
  <span class="app on"><svg viewBox="0 0 70 70"><use href="#preview" width="74" height="74"/></svg></span>
  <span class="sep"></span>
  <svg class="docs" viewBox="0 0 64 80"><rect x="0" y="10" width="64" height="54" rx="6" fill="#55b3e8"/><path d="M11 0h24l13 14v30H11z" fill="#e6e6e6"/><path d="M27 1l2 7 3-7 2 7 2-6" stroke="#222" fill="none" stroke-width="1.500"/><path d="M5 8h34l20 20v52H5z" fill="#f4f4f4"/><path d="M39 8v15q0 5 5 5h15z" fill="#fff" stroke="#ccc"/></svg>
  <span class="thumb"><svg viewBox="0 0 80 58"><rect width="80" height="58" fill="#fff"/><rect width="80" height="4" fill="#55595d"/><rect y="52" width="52" height="1.500" fill="#333"/><path d="M10 7h16M10 11h6M10 14.500h18M10 25.500h25" stroke="#777" stroke-width="1.200"/><path d="M10 17h32" stroke="#e4cd7a" stroke-width="1.200"/></svg><svg class="mini"><use href="#preview"/></svg></span>
  <span class="thumb dark"><svg viewBox="0 0 80 45"><rect width="80" height="45" fill="#1b1c1e"/><rect width="11" height="45" fill="#3a3b3d"/><rect x="12" y="4" width="20" height="5" fill="#2a63d8"/><path d="M12 13h20M12 18h20M12 23h20M12 28h20M12 33h20M12 38h20" stroke="#43464a" stroke-width="2"/><path d="M36 6h34M36 10h26M40 14h14" stroke="#63666a"/><rect x="36" y="19" width="41" height="8" fill="#55585c"/></svg><svg class="mini"><use href="#mail"/></svg></span>
  <svg class="trash" viewBox="0 0 62 78"><path d="M1 8l7 60q2 9 23 9t23-9l7-60z" fill="url(#trashg)"/><ellipse cx="31" cy="8.500" rx="30" ry="7.500" fill="#3a4045" stroke="#7c8388" stroke-width="1.500"/></svg>
</footer>
</body>
</html>
```
FILE: styles.css
```css
* { box-sizing: border-box; }
html, body { margin: 0; height: 1800px; width: 2880px; overflow: hidden; }
body {
  display: flex; flex-direction: column; align-items: flex-start;
  background: linear-gradient(#000 0 1500px, #03080f 1700px, #050d18 1800px);
  font-family: Lato, "Noto Sans", sans-serif;
  color: #212121;
}
svg { display: block; flex: none; overflow: visible; }
.defs { width: 0; height: 0; position: absolute; }
p, h1, h2, ul { margin: 0; padding: 0; list-style: none; }

/* macOS menu bar */
.menubar {
  width: 2880px; height: 50px; flex: none;
  display: flex; justify-content: space-between; align-items: flex-start;
  background: linear-gradient(90deg, #0f2347, #0a1d42 50%, #071936);
  color: #eceef2;
  font: 500 25.5px/46px Inter, sans-serif;
}
.menus {
  display: grid; align-items: center; height: 46px; padding-left: 40px;
  grid-template-columns: 66px 142px 84px 88px 100px 128px 175px 133px 84px 138px auto;
}
.menus .app { font-weight: 700; }
.apple { width: 26px; height: 31px; }
.status {
  display: grid; align-items: center; justify-items: center; height: 48px; width: 992px;
  grid-template-columns: 68px 68px 60px 66px 76px 82px 76px 60px 68px 56px 1fr;
}
.status time { justify-self: start; margin-left: 18px; white-space: nowrap; letter-spacing: .7px; line-height: 46px; }
.us { width: 33px; height: 32px; border-radius: 5px; background: #e9ebef; color: #0a1c40; font-size: 19px; line-height: 32px; text-align: center; font-weight: 600; }
.siri { width: 28px; height: 28px; border-radius: 50%; background: radial-gradient(circle at 50% 50%, #fff 0 12%, transparent 40%), conic-gradient(#4a8a6a, #3b7fa8, #3f64c8, #8a4a9b, #c14b6e, #5b8a7a, #4a8a6a); }

/* browser chrome */
.window { width: 2880px; height: 1630px; flex: none; border-radius: 20px; overflow: hidden; background: #35363a; position: relative; }
.tabstrip { height: 84px; background: #202124; border-top: 2px solid #6b6c6e; display: flex; align-items: center; padding-top: 14px; padding-left: 42px; font: 400 24.500px/32px Inter, sans-serif; color: #fff; }
.lights { display: flex; gap: 16px; width: 146px; margin-top: -14px; }
.lights i { width: 24px; height: 24px; border-radius: 50%; background: #ec6a5e; }
.lights i:nth-child(2) { background: #f4bf4f; }
.lights i:nth-child(3) { background: #61c554; }
.tab { width: 222.2px; height: 68px; flex: none; display: flex; align-items: center; padding-left: 22.500px; position: relative; }
.tab.wide { width: 224px; }
.tab:nth-child(n+4)::after { content: ""; position: absolute; right: -1px; top: 15px; width: 2px; height: 40px; background: #5f6164; }
.tab.active { background: #35363a; border-radius: 16px 16px 0 0; }
.tab.active::before, .tab.active::after { content: ""; position: absolute; bottom: 0; width: 14px; height: 14px; }
.tab.active::before { left: -14px; background: radial-gradient(circle at 0 0, transparent 13.500px, #35363a 14px); }
.tab.active::after { right: -14px; background: radial-gradient(circle at 100% 0, transparent 13.500px, #35363a 14px); }
.fav { width: 32px; height: 32px; flex: none; }
.fav.white { background: #fff; }
.title { width: 96px; margin-left: 16px; overflow: hidden; white-space: nowrap; letter-spacing: -.4px; -webkit-mask: linear-gradient(90deg, #000 65%, transparent); mask: linear-gradient(90deg, #000 65%, transparent); }
.title.short { width: 52px; margin-right: 15px; }
.sound { width: 18px; height: 18px; }
.x { width: 18px; height: 18px; margin-left: 15.500px; }
.sound + .x { margin-left: 26px; }
.plus { width: 24px; height: 24px; margin-left: 32px; }
.chev { width: 18px; height: 12px; margin-left: auto; margin-right: 35px; }

.toolbar { height: 72px; display: flex; align-items: center; padding-left: 30px; }
.nav { width: 28px; height: 28px; margin-right: 36.500px; }
.omnibox { width: 2128px; height: 56px; margin-left: -7.500px; border-radius: 28px; background: #202124; display: flex; align-items: center; padding: 0 23px; font: 400 28.050px/56px Inter, sans-serif; color: #9a9b9e; }
.omnibox .i { width: 28px; height: 28px; margin-right: 17px; }
.omnibox b { color: #fff; font-weight: 400; }
.share { width: 22px; height: 29px; margin-left: auto; }
.star { width: 30px; height: 30px; margin: 0 -2px 0 39px; }
.exts { display: grid; grid-template-columns: repeat(8, 64px); align-items: center; justify-items: center; margin-left: 12px; }
.avatar { width: 44px; height: 44px; border-radius: 50%; background: #7a5bbd; color: #fff; font: 400 23px/44px Inter, sans-serif; text-align: center; }
.bookmarks { height: 66px; padding: 0 0 10px 28px; display: grid; align-items: center; grid-template-columns: 190px 183px 182px 131px 154px 180px 141px 192px 146px 168px 143px 217px 121px 199px 147px 1fr 54px; font: 400 24px/40px Inter, sans-serif; color: #fff; }
.bookmarks span { display: flex; align-items: center; gap: 16px; white-space: nowrap; letter-spacing: -.1px; }
.bookmarks svg { width: 32px; height: 26px; }
.bookmarks .more { font-size: 28px; }

/* page */
.page { height: 1408px; background: #fff; position: relative; overflow: hidden; }
.top { height: 165px; margin-bottom: 31px; padding: 0 313px 0 316px; display: flex; justify-content: space-between; align-items: center; }
.logo { display: flex; }
.mark { width: 103px; height: 103px; }
.words { margin-left: 2px; white-space: nowrap; }
.name { font: 600 63px/64px Lato, sans-serif; color: #949494; letter-spacing: .3px; margin-top: -3px; }
.tagline { font: italic 400 13.900px/17px Lato, sans-serif; color: #2c5f7c; margin: 2px 0 0 7px; }
.claims { font: 400 13.600px/18px Lato, sans-serif; color: #333; margin: 0 0 0 8px; display: flex; align-items: center; gap: 6px; }
.claims i { width: 7.500px; height: 7.500px; background: #eda03c; transform: rotate(45deg); }
.account { display: flex; align-items: center; }
.user { width: 83px; height: 83px; border: 2px solid #4f83c4; border-radius: 50%; display: flex; align-items: center; justify-content: center; }
.user svg { width: 34px; height: 34px; }
.select { height: 76px; width: 517px; margin-left: 8px; border: 2px solid #dededf; border-radius: 8px; display: flex; align-items: center; padding-left: 30px; font-size: 28px; letter-spacing: -.1px; color: #1d1d1d; white-space: nowrap; }
.select svg { width: 20px; height: 20px; margin-left: 11px; }
.balance { position: relative; width: 385px; height: 52px; margin-left: 16px; border-radius: 8px; background: #e8e8e8; display: flex; align-items: center; padding-left: 20px; font-weight: 700; font-size: 24px; letter-spacing: -.04px; color: #666; }
.balance::before { content: ""; position: absolute; left: -9px; top: 17px; width: 18px; height: 18px; background: #e8e8e8; transform: rotate(45deg); }
.balance svg { width: 30px; height: 16px; margin-right: 18px; }

.cards { display: grid; grid-template-columns: 1131px 1131px; gap: 52px; margin-left: 283px; }
.card { height: 1012px; border: 2px solid #d4d4d5; border-radius: 8px; box-shadow: 0 2px 3px #d4d4d588; display: flex; flex-direction: column; }
.body { flex: 1; padding: 20px 28px 0; }
.foot { height: 44px; border-top: 2px solid #f0f0f0; }
h2 { display: flex; align-items: center; height: 46px; font: 700 36px/46px Lato, sans-serif; padding-left: 4px; white-space: nowrap; fill: #222; }
h2 svg { width: 35px; height: 35px; margin-top: 0; }
h2 .grey { fill: #515151; }
.t1 { margin: 0 12px 0 10px; }
.t2 { margin-left: 18px; letter-spacing: -.25px; word-spacing: -.6px; }
.meta { margin-top: 1px; font-size: 28px; line-height: 36px; color: #999; letter-spacing: -.06px; }
.segment { margin-top: 17px; border: 2px solid #dededf; border-radius: 8px; box-shadow: 0 2px 4px rgba(34,36,38,.1); }
.schedule { height: 679px; display: flex; padding-left: 22px; box-shadow: none; }

.calendar { width: 556px; height: 556px; margin-top: 60px; border: 2px solid #f1f1f1; border-radius: 16px; flex: none; color: #2f2f2f; font-size: 27px; font-weight: 500; }
.cal-head { height: 74px; display: flex; justify-content: space-between; align-items: center; padding: 0 25px 4px 24px; font-size: 26.500px; }
.cal-head svg { width: 26px; height: 12px; margin-top: 6px; }
.cal-days, .cal-grid { display: grid; grid-template-columns: repeat(7, 78.800px); justify-items: center; }
.cal-days { height: 66px; line-height: 53px; border-bottom: 2px solid #f1f1f1; color: #c8c8ca; }
.cal-days span, .cal-grid b { color: #2f2f2f; }
.cal-days .l, .cal-grid .l, .cal-days span { color: #c8c8ca; }
.cal-grid { padding: 6px 0 0 .5px; grid-auto-rows: 68.800px; }
.cal-grid b { width: 55px; height: 54px; line-height: 54px; font-weight: 500; text-align: center; border-radius: 3px; }
.calendar .r { color: #b9342b; }
.calendar .r.l { color: #e6a9a6; }
.cal-grid .h { background: #f7f8fa; }
.cal-grid .u { height: 52px; line-height: 52px; border-bottom: 2px solid currentColor; border-radius: 0; }
.cal-grid .today { margin-top: -1px; color: #fff; line-height: 53px; height: 55px; background: linear-gradient(#c1322b 50px, #fff 50px 52px, #c1322b 52px); }

.events { margin-left: 59px; width: 440px; white-space: nowrap; }
.ev-head { height: 52px; margin: 22px 0 39px 36px; display: flex; align-items: center; gap: 11px; font-weight: 700; font-size: 28px; }
.ev-head span { height: 52px; width: 220px; border-radius: 8px; background: #e07838; color: #fff; font-size: 24px; letter-spacing: -.1px; line-height: 52px; text-align: center; }
.event { height: 225px; display: flex; }
.event > svg { width: 40px; height: 40px; fill: #666; margin-right: 47px; }
.event > div { padding-top: 2px; }
.event strong, .event a { display: block; font-size: 28px; line-height: 40px; font-weight: 700; }
.event strong { letter-spacing: -.32px; word-spacing: -.6px; }
a { color: #4f80bf; }
.event p { padding-left: 12px; font-size: 24px; line-height: 41px; color: #999; letter-spacing: -.2px; }
.event small { display: flex; align-items: center; margin-top: 12px; padding-left: 3px; gap: 7px; font-size: 24px; line-height: 40px; color: #7b7b7b; letter-spacing: -.17px; }
.event small svg { width: 23px; height: 23px; }
.pager { display: flex; gap: 5px; margin: 11px 0 0 7px; }
.pager span { width: 57px; height: 57px; border-radius: 50%; background: #53b1ab; display: flex; align-items: center; justify-content: center; }
.pager svg { width: 20px; height: 20px; }

.news { height: 816px; padding: 56px 0 0 39px; }
.feed { height: 700px; width: 1000px; overflow: hidden; display: flex; justify-content: space-between; }
.feed ul { padding-top: 1px; }
.feed li { display: flex; margin-bottom: 78.600px; font: 400 28px/39.800px "Courier New", "Liberation Mono", monospace; color: #999; white-space: nowrap; }
.feed li svg { width: 52px; height: 37px; margin: 11px 39px 0 0; fill: #666; }
.feed a { display: block; font-weight: 700; }
.scroll { width: 20px; background: #e5e5e5; }
.scroll i { display: block; height: 531px; border-radius: 10px; background: #ababab; }

h1 { display: flex; align-items: center; height: 72px; margin: 53px 0 55px 318px; font: 700 56.200px/72px Lato, sans-serif; }
h1 svg { width: 55px; height: 55px; margin: 3px 13px 0 0; fill: #515151; }
.table-top { height: 60px; margin: 0 313px; border-radius: 8px 8px 0 0; background: #53b1ab; }

.ribbon { position: absolute; left: 2520px; top: 1264px; width: 490px; height: 60px; transform: rotate(-45deg); background: linear-gradient(#5e5e5e, #525252); box-shadow: 0 4px 8px rgba(0,0,0,.5); padding: 5px 0; z-index: 1; }
.ribbon span { display: block; height: 50px; border: dotted #c9c9c9; border-width: 2px 0; color: #fff; font: 700 26.500px/46px "Liberation Sans", Arial, sans-serif; text-align: center; text-shadow: 0 -2px #333; }

/* dock */
.dock { position: relative; width: 2522px; height: 108px; margin: 2px 0 0 179px; padding: 14px 0 0 13px; border: 2px solid #3d4249; border-radius: 30px; background: #111920; display: flex; gap: 20px; box-shadow: 0 6px 90px rgba(0,0,0,.3); }
.dock .app { position: relative; width: 70px; height: 70px; flex: none; }
.dock .app > svg { width: 70px; height: 70px; }
.dock .on::after { content: ""; position: absolute; left: 30px; top: 80px; width: 8px; height: 8px; border-radius: 50%; background: #9a9fa6; }
.dock em { position: absolute; right: -8px; top: -8px; width: 32px; height: 32px; border-radius: 50%; background: #e14b3d; color: #fff; font: 400 20px/32px Inter, sans-serif; text-align: center; }
.cal { border-radius: 16px; background: linear-gradient(#e2554a 22px, #f7f6f4 22px); text-align: center; font-family: Inter, sans-serif; }
.cal i { display: block; font: 600 13.500px/23px Inter, sans-serif; color: #fff; }
.cal b { display: block; font: 300 41px/43px Inter, sans-serif; color: #222; }
.sep { width: 2px; height: 80px; margin: -2px 10px 0; background: #444b54; flex: none; }
.docs { width: 64px; height: 80px; margin-top: -4px; }
.thumb { position: relative; width: 80px; height: 58px; margin: 7px 0 0 -1px; flex: none; }
.thumb.dark { height: 45px; margin: 14px 0 0 -10px; }
.mini { position: absolute; right: 0; bottom: -17px; width: 27px; height: 27px; }
.trash { width: 62px; height: 78px; margin-top: -4px; }
```
